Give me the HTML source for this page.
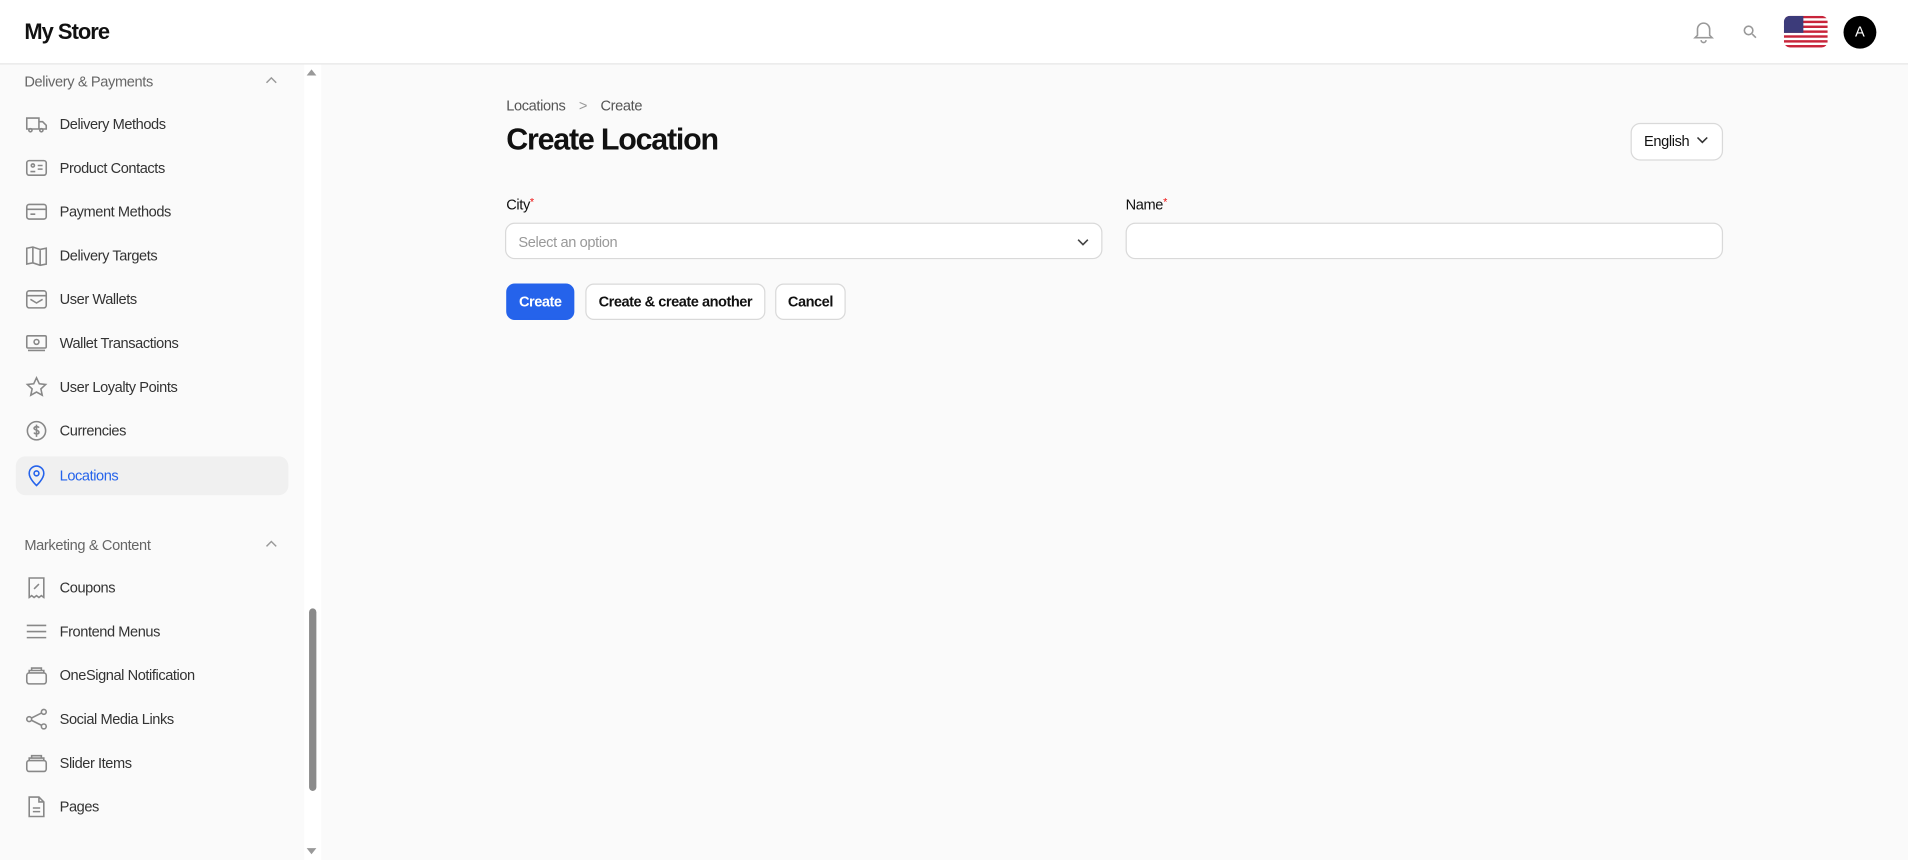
<!DOCTYPE html>
<html><head><meta charset="utf-8"><style>
html,body{margin:0;padding:0;width:1908px;height:860px;overflow:hidden;background:#fafafa}
#w{width:1568px;height:707px;transform:scale(1.21684);transform-origin:0 0;position:relative;font-family:"Liberation Sans",sans-serif;color:#111}
.top{position:absolute;left:0;top:0;width:1568px;height:52px;background:#fff;border-bottom:1px solid #e5e5e5}
.logo{position:absolute;left:20px;top:16px;font-size:18px;font-weight:bold;letter-spacing:-0.8px}
.side{position:absolute;left:0;top:53px;width:250px;height:654px;background:#fafafa}
.grp{position:absolute;left:20px;font-size:12px;color:#666;letter-spacing:-0.3px}
.chev{position:absolute;left:218px;width:10px;height:10px}
.item{position:absolute;left:13px;width:224px;height:32px;border-radius:8px;font-size:12px;color:#333;letter-spacing:-0.35px}
.item span{position:absolute;left:36px;top:9px}
.item svg{position:absolute;left:8px;top:7px;width:18px;height:18px;fill:none;stroke:#888;stroke-width:1.3}
.item.act{background:#f0f0f0;color:#2563eb}
.item.act svg{stroke:#2563eb}
.sb{position:absolute;left:250px;top:53px;width:14px;height:654px;background:#fff}
.thumb{position:absolute;left:254px;top:500px;width:6px;height:150px;background:#8a8a8a;border-radius:3px}
.lbl{position:absolute;font-size:12px;color:#111;letter-spacing:-0.3px}
.lbl b{color:#e11;font-weight:normal;font-size:9px;vertical-align:top}
.inp{position:absolute;top:183px;height:30px;background:#fff;border:1px solid #d9d9d9;border-radius:8px;box-sizing:border-box}
.btn{position:absolute;top:233px;height:30px;border-radius:7px;font-size:12px;font-weight:bold;box-sizing:border-box;text-align:center;line-height:28px;background:#fff;border:1px solid #d9d9d9;letter-spacing:-0.4px}
</style></head><body><div id="w">
<div class="top"><div class="logo">My Store</div>
<svg style="position:absolute;left:1391px;top:16px" width="18" height="20" viewBox="0 0 18 20" fill="none" stroke="#999" stroke-width="1.3"><path d="M4 8a5 5 0 0110 0v5l2 2H2l2-2z"/><path d="M7 17a2 2 0 004 0"/></svg>
<svg style="position:absolute;left:1432px;top:20px" width="12" height="12" viewBox="0 0 12 12" fill="none" stroke="#999" stroke-width="1.3"><circle cx="5" cy="5" r="3.5"/><path d="M8 8l3 3"/></svg>
<svg style="position:absolute;left:1466px;top:13px" width="36" height="26" viewBox="0 0 36 26"><defs><clipPath id="c"><rect width="36" height="26" rx="5"/></clipPath></defs><g clip-path="url(#c)"><rect width="36" height="26" fill="#fff"/><g fill="#c8243a"><rect y="0" width="36" height="2"/><rect y="4" width="36" height="2"/><rect y="8" width="36" height="2"/><rect y="12" width="36" height="2"/><rect y="16" width="36" height="2"/><rect y="20" width="36" height="2"/><rect y="24" width="36" height="2"/></g><rect width="16" height="14" fill="#3c3b7a"/></g></svg>
<div style="position:absolute;left:1515px;top:13px;width:27px;height:27px;border-radius:50%;background:#000;color:#fff;font-size:12px;text-align:center;line-height:27px">A</div>
</div>
<div class="side">
<div class="grp" style="top:7px">Delivery &amp; Payments</div>
<svg class="chev" style="top:8px" viewBox="0 0 10 10" fill="none" stroke="#999" stroke-width="1.2"><path d="M1 7l4-4 4 4"/></svg>
<div class="item" style="top:33px"><svg viewBox="0 0 18 18"><path d="M1 4h10v9H1zM11 7h3l3 3v3h-6"/><circle cx="4" cy="14" r="1.3"/><circle cx="13" cy="14" r="1.3"/></svg><span>Delivery Methods</span></div>
<div class="item" style="top:69px"><svg viewBox="0 0 18 18"><rect x="1" y="3" width="16" height="12" rx="2"/><circle cx="6" cy="7" r="1.3"/><path d="M4 12h4M10 7h4M10 10h4"/></svg><span>Product Contacts</span></div>
<div class="item" style="top:105px"><svg viewBox="0 0 18 18"><rect x="1" y="3" width="16" height="12" rx="2"/><path d="M1 7h16M4 11h4"/></svg><span>Payment Methods</span></div>
<div class="item" style="top:141px"><svg viewBox="0 0 18 18"><path d="M1 3l5-1 6 2 5-1v13l-5 1-6-2-5 1zM6 2v13M12 4v13"/></svg><span>Delivery Targets</span></div>
<div class="item" style="top:177px"><svg viewBox="0 0 18 18"><rect x="1" y="2" width="16" height="14" rx="2"/><path d="M1 6h16M4 9l5 3 5-3"/></svg><span>User Wallets</span></div>
<div class="item" style="top:213px"><svg viewBox="0 0 18 18"><rect x="1" y="3" width="16" height="10" rx="1"/><circle cx="9" cy="8" r="2"/><path d="M2 15h14"/></svg><span>Wallet Transactions</span></div>
<div class="item" style="top:249px"><svg viewBox="0 0 18 18"><path d="M9 1.5l2.3 4.9 5.2.6-3.9 3.6 1.1 5.2L9 13.2l-4.7 2.6 1.1-5.2L1.5 7l5.2-.6z"/></svg><span>User Loyalty Points</span></div>
<div class="item" style="top:285px"><svg viewBox="0 0 18 18"><circle cx="9" cy="9" r="7.5"/><path d="M11 6.5c-.5-1-3.5-1.3-4 .3s4 1.5 4 3.4-3.5 1.6-4 .3M9 4v10"/></svg><span>Currencies</span></div>
<div class="item act" style="top:322px"><svg viewBox="0 0 18 18"><path d="M9 17s6-5.5 6-10A6 6 0 003 7c0 4.5 6 10 6 10z"/><circle cx="9" cy="7" r="2"/></svg><span>Locations</span></div>
<div class="grp" style="top:388px">Marketing &amp; Content</div>
<svg class="chev" style="top:389px" viewBox="0 0 10 10" fill="none" stroke="#999" stroke-width="1.2"><path d="M1 7l4-4 4 4"/></svg>
<div class="item" style="top:414px"><svg viewBox="0 0 18 18"><path d="M3 1h12v16l-2-1.5-2 1.5-2-1.5-2 1.5-2-1.5-2 1.5zM7 10l4-4"/></svg><span>Coupons</span></div>
<div class="item" style="top:450px"><svg viewBox="0 0 18 18"><path d="M1 4h16M1 9h16M1 14h16"/></svg><span>Frontend Menus</span></div>
<div class="item" style="top:486px"><svg viewBox="0 0 18 18"><rect x="1" y="7" width="16" height="9" rx="2"/><path d="M3 7V5h12v2M5 5V3h8v2"/></svg><span>OneSignal Notification</span></div>
<div class="item" style="top:522px"><svg viewBox="0 0 18 18"><circle cx="3" cy="9" r="2"/><circle cx="15" cy="3" r="2"/><circle cx="15" cy="15" r="2"/><path d="M5 8l8-4M5 10l8 4"/></svg><span>Social Media Links</span></div>
<div class="item" style="top:558px"><svg viewBox="0 0 18 18"><rect x="1" y="7" width="16" height="9" rx="2"/><path d="M3 7V5h12v2M5 5V3h8v2"/></svg><span>Slider Items</span></div>
<div class="item" style="top:594px"><svg viewBox="0 0 18 18"><path d="M3 1h8l4 4v12H3zM11 1v4h4M6 10h6M6 13h6"/></svg><span>Pages</span></div>
</div>
<div class="sb"></div>
<div style="position:absolute;left:252px;top:57px;border:4px solid transparent;border-bottom:5px solid #999;border-top:0"></div>
<div style="position:absolute;left:252px;top:697px;border:4px solid transparent;border-top:5px solid #999;border-bottom:0"></div>
<div class="thumb"></div>
<div style="position:absolute;left:416px;top:80px;font-size:12px;color:#555;letter-spacing:-0.3px">Locations <span style="margin:0 8px;color:#999">&gt;</span> Create</div>
<div style="position:absolute;left:416px;top:101px;font-size:25px;font-weight:bold;letter-spacing:-1px">Create Location</div>
<div style="position:absolute;left:1340px;top:101px;width:76px;height:31px;box-sizing:border-box;border:1px solid #d9d9d9;border-radius:8px;background:#fff;font-size:12px;line-height:29px;padding-left:10px;letter-spacing:-0.3px">English <svg width="10" height="10" viewBox="0 0 10 10" fill="none" stroke="#333" stroke-width="1.3" style="margin-left:3px"><path d="M1 3l4 4 4-4"/></svg></div>
<div class="lbl" style="left:416px;top:161px">City<b>*</b></div>
<div class="lbl" style="left:925px;top:161px">Name<b>*</b></div>
<div class="inp" style="left:415px;width:491px"><span style="position:absolute;left:10px;top:8px;font-size:12px;color:#999;letter-spacing:-0.3px">Select an option</span><svg style="position:absolute;right:10px;top:10px" width="10" height="10" viewBox="0 0 10 10" fill="none" stroke="#444" stroke-width="1.3"><path d="M1 3l4 4 4-4"/></svg></div>
<div class="inp" style="left:925px;width:491px"></div>
<div class="btn" style="left:416px;width:56px;background:#2563eb;border-color:#2563eb;color:#fff">Create</div>
<div class="btn" style="left:481px;width:148px">Create &amp; create another</div>
<div class="btn" style="left:637px;width:58px">Cancel</div>
</div></body></html>
